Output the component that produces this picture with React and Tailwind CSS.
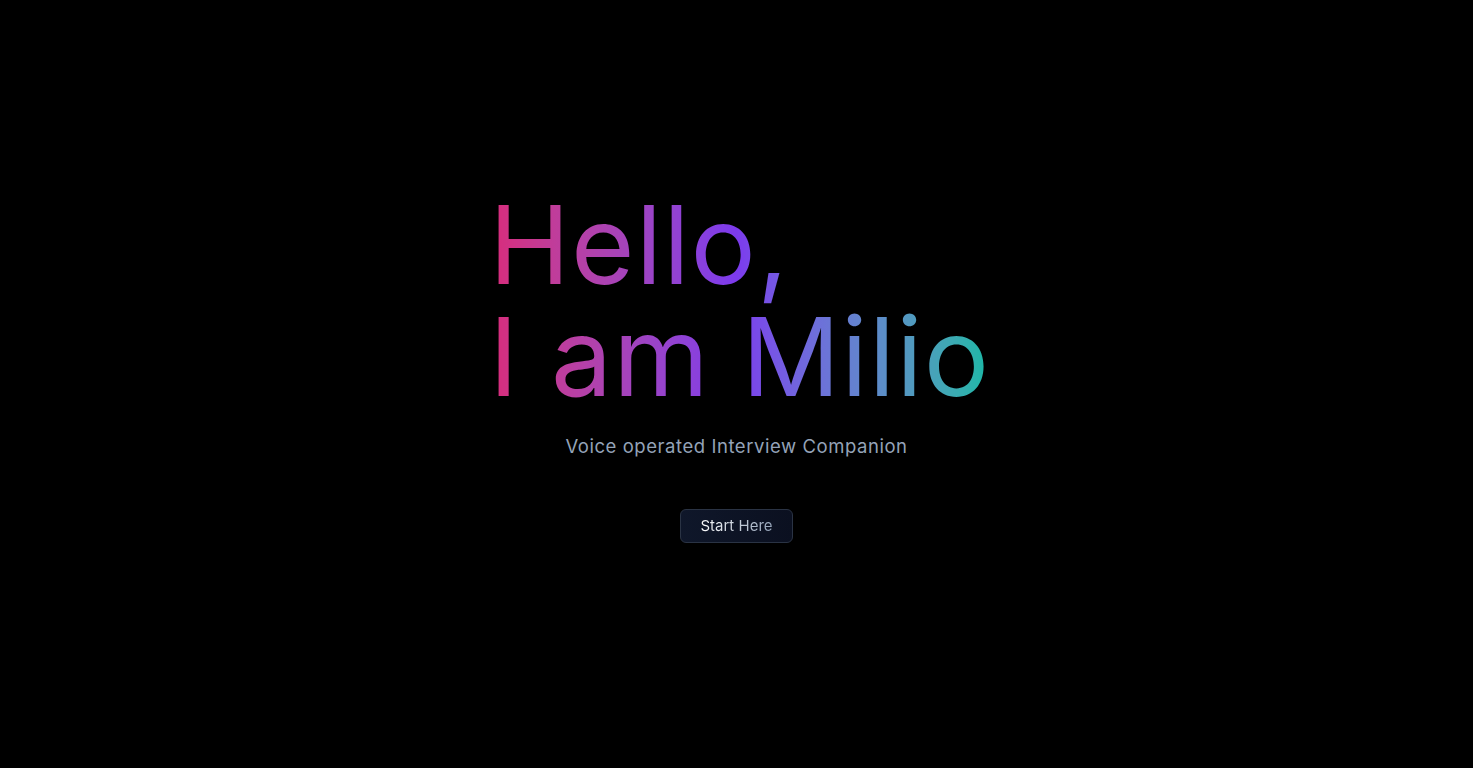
export default function App() {
  return (
    <div className="min-h-screen w-full bg-black flex flex-col items-center pt-[188px]" style={{ fontFamily: 'Inter, "Noto Sans", sans-serif' }}>
      <h1 className="text-[109px] leading-[112px] font-normal tracking-[0.01em] bg-gradient-to-r from-[#db2777] via-[#7c3aed] to-[#14b8a6] bg-clip-text text-transparent pb-[10px] pl-[6px]">
        Hello,
        <br />
        I am Milio
      </h1>
      <p className="mt-[10px] text-[18.5px] leading-[28px] tracking-[0.03em] text-[#94a3b8]">
        Voice operated Interview Companion
      </p>
      <button className="mt-[49px] h-[34px] px-[19px] rounded-md border border-[#2a3344] bg-gradient-to-r from-[#0f172a] to-[#0b1020] text-[15px]">
        <span className="bg-gradient-to-r from-white to-[#94a3b8] bg-clip-text text-transparent">Start Here</span>
      </button>
    </div>
  );
}
